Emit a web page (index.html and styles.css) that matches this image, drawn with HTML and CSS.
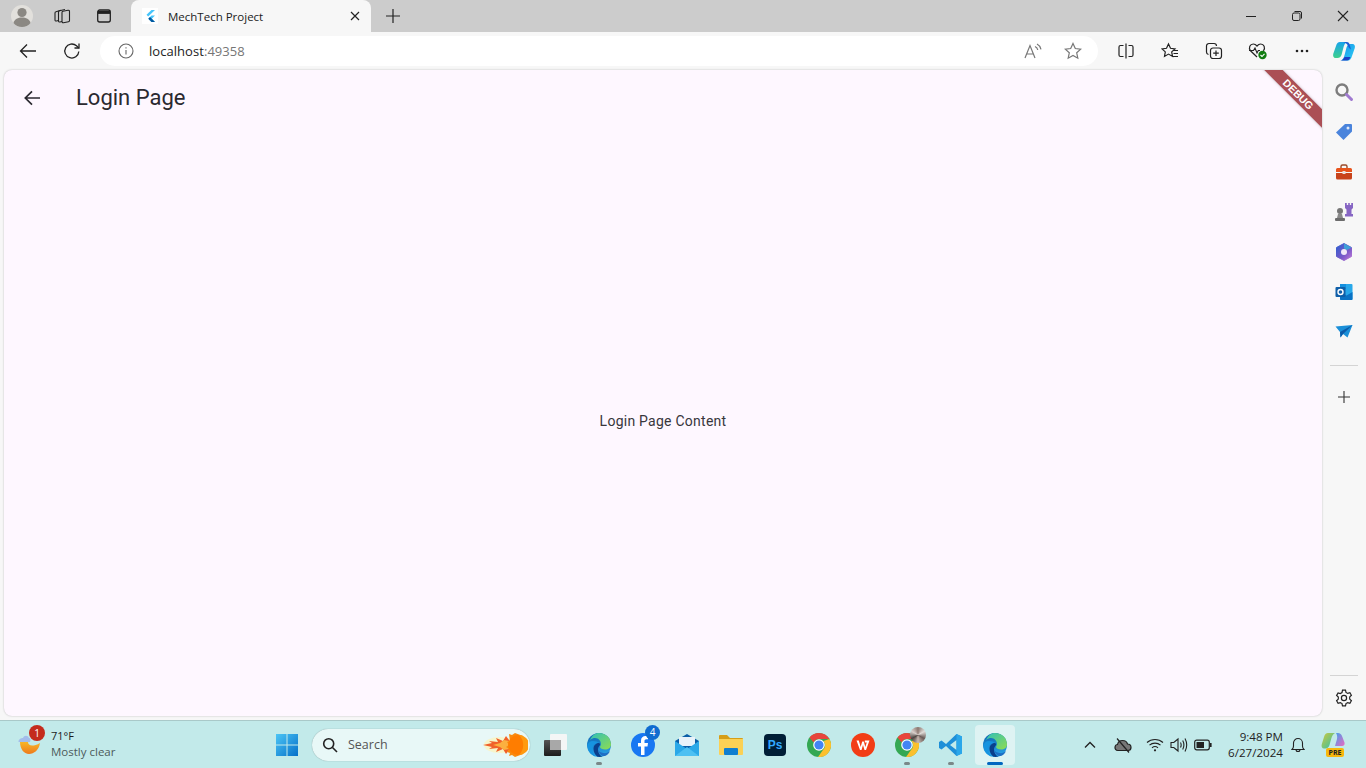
FILE: index.html
```html
<!DOCTYPE html>
<html lang="en">
<head>
    <meta charset="UTF-8">
    <title>MechTech Project</title>
    <link rel="stylesheet" href="styles.css">
</head>
<body>
    <div class="tabbar">
        <div class="tb-slot profile">
            <svg width="24" height="24" viewBox="0 0 24 24"><circle cx="12" cy="12" r="11" fill="#e2e0dc"/><circle cx="12" cy="8.5" r="4.6" fill="#8b8883"/><path d="M3.5 19c1-4 4.5-5.5 8.5-5.5s7.5 1.500 8.500 5.500c-2 2.500-5 4-8.500 4s-6.500-1.500-8.500-4z" fill="#8b8883"/></svg>
        </div>
        <div class="tb-slot workspaces">
            <svg width="18" height="18" viewBox="0 0 18 18" fill="none" stroke="#222" stroke-width="1.1"><path d="M9 5.5q0-1 1-1.200l5-1q1.500-.2 1.500 1.200v9q0 1-1 1.200l-5 1q-1.500.2-1.500-1.200z"/><path d="M9 14.500l-2 .5q-1.500.2-1.500-1V5q0-1 1-1.200L12 2.500"/><path d="M5.500 13.500l-2 .5Q2 14.200 2 13V6q0-1 1-1.200L8 3.200"/></svg>
        </div>
        <div class="tb-slot tabactions">
            <svg width="16" height="16" viewBox="0 0 16 16" fill="none" stroke="#222" stroke-width="1.3"><rect x="1.7" y="2" width="12.6" height="12" rx="2"/><path d="M2 4.400h12" stroke-width="3"/></svg>
        </div>
        <div class="tab">
            <svg class="favicon" width="16" height="16" viewBox="0 0 16 16"><rect width="16" height="16" fill="#fff"/><path d="M9.5 2H13L6.200 8.500 4.500 6.800z" fill="#47c5fb"/><path d="M9.5 7.500H13L9.800 10.700 13 14H9.500L6.300 10.700z" fill="#47c5fb"/><path d="M6.300 10.700L8 9l1.800 1.700L8 12.500z" fill="#00569e"/><path d="M8 12.500l1.800-1.800L13 14H9.500z" fill="#00569e"/></svg>
            <span class="tab-title">MechTech Project</span>
            <svg class="tab-close" width="10" height="10" viewBox="0 0 10 10" stroke="#222" stroke-width="1.2"><path d="M1 1l8 8M9 1L1 9"/></svg>
        </div>
        <div class="tb-slot newtab">
            <svg width="16" height="16" viewBox="0 0 16 16" stroke="#222" stroke-width="1.2"><path d="M8 1v14M1 8h14"/></svg>
        </div>
        <div class="window-btns">
            <div class="win-btn"><svg width="12" height="12" viewBox="0 0 12 12" stroke="#222"><path d="M1 6.500h10"/></svg></div>
            <div class="win-btn"><svg width="12" height="12" viewBox="0 0 12 12" fill="none" stroke="#222"><rect x="1.500" y="3" width="7.500" height="7.500" rx="1.500"/><path d="M3.500 1.500H9A1.500 1.500 0 0 1 10.500 3v5.500"/></svg></div>
            <div class="win-btn"><svg width="12" height="12" viewBox="0 0 12 12" stroke="#222" stroke-width="1.1"><path d="M1 1l10 10M11 1L1 11"/></svg></div>
        </div>
    </div>

    <div class="toolbar">
        <div class="tool back">
            <svg width="18" height="16" viewBox="0 0 18 16" fill="none" stroke="#222" stroke-width="1.3"><path d="M17 8H1.500M8 1.500L1.500 8 8 14.500"/></svg>
        </div>
        <div class="tool reload">
            <svg width="18" height="18" viewBox="0 0 18 18" fill="none" stroke="#222" stroke-width="1.3"><path d="M15.800 9.500a7 7 0 1 1-2.300-5.700L15.800 6"/><path d="M16 1.500V6h-4.500"/></svg>
        </div>
        <div class="address">
            <svg class="info" width="16" height="16" viewBox="0 0 16 16" fill="none" stroke="#666" stroke-width="1.1"><circle cx="8" cy="8" r="7"/><path d="M8 7v4.500M8 4.300v1.200"/></svg>
            <span class="url">localhost<span class="port">:49358</span></span>
            <svg class="aloud" width="18" height="16" viewBox="0 0 18 16" fill="none" stroke="#777" stroke-width="1.2"><path d="M1 15L6 2.500 11 15M2.800 11h6.500"/><path d="M11 3.500c1.500.7 2.500 2 2.800 3.500M13 1c2 1 3.500 3 4 5.300"/></svg>
            <svg class="star" width="18" height="18" viewBox="0 0 18 18" fill="none" stroke="#777" stroke-width="1.2"><path d="M9 1.500l2.300 5 5.400.6-4 3.700 1.100 5.400L9 13.500l-4.800 2.700 1.100-5.400-4-3.700 5.400-.6z"/></svg>
        </div>
        <div class="tool split">
            <svg width="16" height="16" viewBox="0 0 16 16" fill="none" stroke="#222" stroke-width="1.2"><path d="M5.500 2.500h-3A1.500 1.500 0 0 0 1 4v8a1.500 1.500 0 0 0 1.500 1.500h3M10.500 2.500h3A1.500 1.500 0 0 1 15 4v8a1.500 1.500 0 0 1-1.500 1.500h-3M8 .5v15"/></svg>
        </div>
        <div class="tool favs">
            <svg width="18" height="18" viewBox="0 0 18 18" fill="none" stroke="#222" stroke-width="1.2"><path d="M7.500 2l2 4.300 4.500.6-3.300 3 .8 4.500-4-2.300-4 2.300.8-4.500L1 6.900l4.500-.6z"/><path d="M12 8.500h5M12.500 11.500h4.500M12 14.500h5"/></svg>
        </div>
        <div class="tool collections">
            <svg width="18" height="18" viewBox="0 0 18 18" fill="none" stroke="#222" stroke-width="1.2"><path d="M3.500 12.500A2.500 2.500 0 0 1 1.500 10V4A2.500 2.500 0 0 1 4 1.500h5A2.500 2.500 0 0 1 11.500 4"/><rect x="5.500" y="6" width="11" height="10.500" rx="2.500"/><path d="M11 8.500V14M8.200 11.200h5.600"/></svg>
        </div>
        <div class="tool health">
            <svg width="20" height="18" viewBox="0 0 20 18"><path d="M9 15L2.500 8.800C.2 6 2 2 5.300 2 7 2 8 2.800 9 4c1-1.200 2-2 3.700-2 3.300 0 5 4 2.700 6.800" fill="none" stroke="#222" stroke-width="1.2"/><path d="M1 8.500h4.500L7 6l2 5 1.300-2.500H12" fill="none" stroke="#222" stroke-width="1.1"/><circle cx="14.500" cy="13" r="4.200" fill="#107c10"/><path d="M12.500 13l1.500 1.500 2.500-2.700" fill="none" stroke="#fff" stroke-width="1.1"/></svg>
        </div>
        <div class="tool more">
            <svg width="14" height="4" viewBox="0 0 14 4" fill="#222"><circle cx="2" cy="2" r="1.3"/><circle cx="7" cy="2" r="1.3"/><circle cx="12" cy="2" r="1.3"/></svg>
        </div>
        <div class="tool copilot">
            <svg width="24" height="24" viewBox="0 0 24 24"><defs><linearGradient id="cpa" x1="0" y1="0" x2="0" y2="1"><stop offset="0" stop-color="#18a4ec"/><stop offset="1" stop-color="#3ed08c"/></linearGradient><linearGradient id="cpb" x1="0" y1="0" x2="1" y2="1"><stop offset="0" stop-color="#1490ea"/><stop offset="1" stop-color="#2fd0f4"/></linearGradient></defs><path d="M8 3h7c-2 1-3 3-3.700 6L9.500 16c-.7 2-2 3-4 3h-2C1.500 19 .8 17 1.200 15L4 7c.7-2.500 2-4 4-4z" fill="url(#cpa)"/><path d="M16 21.500H9c2-1 3-3 3.700-6l1.800-7c.7-2 2-3.500 4-3.500h2c2 0 2.800 2 2.300 4L20 17c-.7 2.500-2 4.500-4 4.500z" fill="url(#cpb)"/><path d="M8 21.500h7c2 0 3-2 3.500-3.500h-6c-.8 1.700-2.200 3.500-4.500 3.500z" fill="#1b3fc4"/><path d="M11 3h4c1 0 2 .7 2.500 2l1.500 5.500c-1.500-1-2.500-2-3-3.500-.5-1.500-1.800-3.500-5-4z" fill="#1d5fd6"/></svg>
        </div>
    </div>

    <div class="middle">
        <div class="page">
            <div class="appbar">
                <div class="appbar-back">
                    <svg width="16" height="16" viewBox="0 0 16 16" fill="none" stroke="#2b2930" stroke-width="1.7"><path d="M16 8H1.500M8 1.300L1.300 8 8 14.700"/></svg>
                </div>
                <div class="appbar-title">Login Page</div>
            </div>
            <div class="content">Login Page Content</div>
            <div class="debug-banner">DEBUG</div>
        </div>
        <div class="sidebar">
            <div class="side-item">
                <svg width="20" height="20" viewBox="0 0 20 20" fill="none"><circle cx="8" cy="8" r="5.500" stroke="#7d7d7d" stroke-width="2.4"/><path d="M12.500 12.500l5 5" stroke="#a07ad0" stroke-width="3" stroke-linecap="round"/></svg>
            </div>
            <div class="side-item">
                <svg width="18" height="18" viewBox="0 0 18 18"><path d="M10 1h6a1 1 0 0 1 1 1v6.500L8.500 17 1 9.500z" fill="#4a84dc"/><circle cx="13" cy="5" r="1.500" fill="#dfe9f8"/></svg>
            </div>
            <div class="side-item">
                <svg width="18" height="16" viewBox="0 0 18 16"><path d="M6 4V2.500A1.500 1.500 0 0 1 7.500 1h3A1.500 1.500 0 0 1 12 2.500V4" fill="none" stroke="#9a4a28" stroke-width="1.4"/><path d="M1 5.500A1.500 1.500 0 0 1 2.500 4h13A1.500 1.500 0 0 1 17 5.500V8H1z" fill="#e8541c"/><path d="M1 9h16v5a1.500 1.500 0 0 1-1.500 1.500h-13A1.500 1.500 0 0 1 1 14z" fill="#c8431a"/><rect x="7.500" y="7" width="3" height="3" fill="#eadfd8"/></svg>
            </div>
            <div class="side-item">
                <svg width="20" height="20" viewBox="0 0 20 20"><path d="M11 1h1.800v2h1.400V1h1.600v2h1.400V1H19v5l-1.500 1.500V12H19v2.500h-8V12h1.500V7.500L11 6z" fill="#8766c4"/><circle cx="6" cy="9" r="3" fill="#767676"/><path d="M4 12h4l1 4H3z" fill="#8a8a8a"/><rect x="1" y="16" width="10" height="3" rx="1" fill="#6c6c6c"/></svg>
            </div>
            <div class="side-item">
                <svg width="18" height="18" viewBox="0 0 18 18"><defs><linearGradient id="m365" x1="0" y1="0" x2="1" y2="1"><stop offset="0" stop-color="#2a5fd0"/><stop offset=".6" stop-color="#7a58c8"/><stop offset="1" stop-color="#c27ad8"/></linearGradient></defs><path d="M9 .5l7.500 4v9L9 17.500l-7.500-4v-9z" fill="url(#m365)" stroke="url(#m365)" stroke-linejoin="round"/><path d="M9 .5l7.500 4L12 7 9 5.500z" fill="#3fa0d8"/><circle cx="9" cy="9" r="3" fill="#f0e8f8"/></svg>
            </div>
            <div class="side-item">
                <svg width="18" height="18" viewBox="0 0 18 18"><rect x="5" y="1" width="12.500" height="16" rx="1" fill="#28a8ea"/><path d="M5 9l6.500 3.500L17.500 9v7a1 1 0 0 1-1 1H6a1 1 0 0 1-1-1z" fill="#0a72c4"/><rect x="5" y="1" width="6" height="5" fill="#1490df"/><rect x=".5" y="4" width="10" height="10" rx="1" fill="#0f5fa8"/><circle cx="5.500" cy="9" r="2.500" fill="none" stroke="#fff" stroke-width="1.4"/></svg>
            </div>
            <div class="side-item">
                <svg width="18" height="16" viewBox="0 0 18 16"><path d="M.5 2.500L17.500 1l-5 12.500L8 10l-2.500 3.500L5 8z" fill="#1a8fd8"/><path d="M5 8L17.500 1 8 10l-2.500 3.500z" fill="#0b5aa8"/></svg>
            </div>
            <div class="side-divider first"></div>
            <div class="side-add">
                <svg width="14" height="14" viewBox="0 0 14 14" stroke="#333" stroke-width="1.1"><path d="M7 1v12M1 7h12"/></svg>
            </div>
            <div class="side-spacer"></div>
            <div class="side-divider"></div>
            <div class="side-gear">
                <svg width="18" height="18" viewBox="0 0 18 18" fill="none" stroke="#222" stroke-width="1.2"><circle cx="9" cy="9" r="2.600"/><path d="M7.500 1.200h3l.5 2.200 1.700 1 2.200-.7 1.500 2.600-1.700 1.600v2.200l1.700 1.600-1.500 2.600-2.200-.7-1.700 1-.5 2.200h-3l-.5-2.200-1.700-1-2.200.7-1.500-2.600 1.700-1.600V8.100L1.600 6.500l1.500-2.600 2.200.7 1.700-1z"/></svg>
            </div>
        </div>
    </div>

    <div class="taskbar">
        <div class="weather">
            <div class="weather-icon">
                <svg width="24" height="24" viewBox="0 0 24 24"><defs><linearGradient id="moon" x1="0" y1="0" x2="0" y2="1"><stop offset="0" stop-color="#f8b628"/><stop offset="1" stop-color="#ee7a1c"/></linearGradient></defs><path d="M2 9h8c0 4 5 5 12 1-1 7-6 11-11 11-5 0-9-5-9-12z" fill="url(#moon)"/><path d="M.5 9c0-3 2.500-4 4.500-4 1-3 5-3 6 0 1.500 0 2 2 1 4z" fill="#a3bcec"/></svg>
                <span class="weather-badge">1</span>
            </div>
            <div class="weather-text">
                <div class="temp">71°F</div>
                <div class="cond">Mostly clear</div>
            </div>
        </div>
        <div class="task-slot start">
            <svg width="24" height="24" viewBox="0 0 24 24"><defs><linearGradient id="winb" x1="0" y1="0" x2="1" y2="1"><stop offset="0" stop-color="#4cc5f5"/><stop offset="1" stop-color="#0570c9"/></linearGradient></defs><path d="M1 1h10.500v10.500H1zM12.500 1H23v10.500H12.500zM1 12.500h10.500V23H1zM12.500 12.500H23V23H12.500z" fill="url(#winb)"/></svg>
        </div>
        <div class="searchbox">
            <svg class="search-icon" width="16" height="16" viewBox="0 0 16 16" fill="none" stroke="#222" stroke-width="1.6"><circle cx="6.700" cy="6.700" r="5"/><path d="M10.500 10.500L15 15"/></svg>
            <span class="search-text">Search</span>
            <svg class="search-art" width="46" height="26" viewBox="0 0 46 26"><ellipse cx="18" cy="13" rx="16" ry="8" fill="#fdf4b8" opacity=".7"/><path d="M1 13l9-2-3-2 9 1-2-4 7 3 3-5 3 4v10l-3 4-3-5-7 3 2-4-9 1 3-2z" fill="#f0602a"/><path d="M11 13l7-2 4-3 5 1v8l-5 1-4-3z" fill="#fbb040"/><path d="M27 2l3 1 3-2 8 3v18l-8 3-3-2-3 1 1-3-3-1 2-3-3-2 3-2-2-3 3-1z" fill="#f98a10"/><circle cx="36" cy="13" r="10" fill="#ff7d00"/><path d="M37 3a10 10 0 0 1 0 20 14 14 0 0 0 0-20z" fill="#ff9a10"/></svg>
        </div>
        <div class="task-slot">
            <svg width="24" height="24" viewBox="0 0 24 24"><defs><linearGradient id="tvk" x1="0" y1="0" x2="0" y2="1"><stop offset="0" stop-color="#555"/><stop offset="1" stop-color="#1c1c1c"/></linearGradient></defs><rect x="1" y="7" width="17" height="16" rx="1" fill="url(#tvk)"/><rect x="7" y="1" width="17" height="16" rx="1" fill="#f4f6f6"/><rect x="7" y="7" width="11" height="10" fill="#a8a8a8"/></svg>
        </div>
        <div class="task-slot">
            <svg width="26" height="26" viewBox="0 0 26 26"><use href="#edge-mark"/></svg>
            <span class="run-dot"></span>
        </div>
        <div class="task-slot">
            <svg width="24" height="24" viewBox="0 0 24 24"><circle cx="12" cy="12" r="12" fill="#1877f2"/><path d="M13.500 22v-8.500h3l.5-3.500h-3.500V8c0-1 .5-1.800 1.900-1.800H17v-3C16.500 3.100 15.500 3 14.500 3 12 3 10 4.500 10 7.500V10H7v3.500h3V22z" fill="#fff"/></svg>
            <span class="fb-badge">4</span>
        </div>
        <div class="task-slot">
            <svg width="24" height="22" viewBox="0 0 24 22"><path d="M12 0l12 7v15H0V7z" fill="#0a5ea8"/><rect x="4" y="3" width="16" height="9" fill="#e8f2fa"/><path d="M0 7l12 8 12-8v15H0z" fill="#2aa8e8"/><path d="M0 22l12-9 12 9z" fill="#4cc0f2"/></svg>
        </div>
        <div class="task-slot">
            <svg width="24" height="22" viewBox="0 0 24 22"><path d="M0 2a1 1 0 0 1 1-1h7l3 3h12a1 1 0 0 1 1 1v3H0z" fill="#d69e18"/><path d="M0 5h24v15a1 1 0 0 1-1 1H1a1 1 0 0 1-1-1z" fill="#fbd155"/><rect x="5" y="14" width="14" height="7" rx="1" fill="#0f7fd0"/></svg>
        </div>
        <div class="task-slot">
            <div class="ps-icon">Ps</div>
        </div>
        <div class="task-slot">
            <svg width="24" height="24" viewBox="0 0 24 24"><use href="#chrome-mark"/></svg>
        </div>
        <div class="task-slot">
            <svg width="24" height="24" viewBox="0 0 24 24"><circle cx="12" cy="12" r="12" fill="#f23d16"/><path d="M5.500 7.500L9 17h1.500L12 12l1.500 5H15l3.500-9.500h-4.700v2h2L14.300 14l-1.500-5.500h-1.600L9.700 14 7.800 7.500z" fill="#fff"/></svg>
        </div>
        <div class="task-slot">
            <svg width="24" height="24" viewBox="0 0 24 24"><use href="#chrome-mark"/></svg>
            <span class="chrome-avatar"></span>
            <span class="run-dot"></span>
        </div>
        <div class="task-slot">
            <svg width="24" height="24" viewBox="0 0 24 24"><path d="M17.500 1L23 3.500v17L17.500 23 7 13l-4.500 3.500L0 15V9l2.500-1.500L7 11zm0 6L11 12l6.500 5z" fill="#1e8fd8"/><path d="M17.500 1L23 3.500v17L17.500 23z" fill="#2aa7ea"/></svg>
            <span class="run-dot"></span>
        </div>
        <div class="task-slot active">
            <svg width="26" height="26" viewBox="0 0 26 26"><use href="#edge-mark"/></svg>
            <span class="run-bar"></span>
        </div>
        <div class="tray">
            <svg class="tray-chevron" width="12" height="8" viewBox="0 0 12 8" fill="none" stroke="#222" stroke-width="1.3"><path d="M1 6.500l5-5 5 5"/></svg>
            <svg class="tray-cloud" width="18" height="16" viewBox="0 0 18 16" fill="none" stroke="#222" stroke-width="1.2"><path d="M4 13.500c-2.500 0-3-2-3-3 0-2 1.500-3 2.500-3 .5-2.500 2.500-4 5-4s4.500 1.500 5 3.500c2 0 3.500 1.500 3.500 3.500 0 1.500-1 3-3 3z" fill="#777"/><path d="M3 1.500l12 14"/></svg>
            <svg class="tray-wifi" width="18" height="16" viewBox="0 0 18 16" fill="none" stroke="#222" stroke-width="1.1"><path d="M1 5.500c4.500-4 11.500-4 16 0M3.500 8.200c3-2.800 8-2.800 11 0M6 10.800c1.700-1.500 4.300-1.500 6 0"/><circle cx="9" cy="13.300" r="1.100" fill="#222" stroke="none"/></svg>
            <svg class="tray-sound" width="18" height="16" viewBox="0 0 18 16" fill="none" stroke="#222" stroke-width="1.1"><path d="M1 5.500h2.800L8 2v12l-4.200-3.500H1z"/><path d="M10.500 5.500c.8 1.500.8 3.500 0 5M12.700 3.500c1.500 2.800 1.500 6.200 0 9M15 1.500c2 3.800 2 9.200 0 13"/></svg>
            <svg class="tray-battery" width="18" height="12" viewBox="0 0 18 12"><rect x=".7" y="1.200" width="14.600" height="9.600" rx="2" fill="none" stroke="#222" stroke-width="1.2"/><rect x="2.500" y="3" width="7.500" height="6" fill="#222"/><rect x="16" y="4" width="1.600" height="4" fill="#222"/></svg>
            <div class="clock">
                <div>9:48 PM</div>
                <div>6/27/2024</div>
            </div>
            <svg class="tray-bell" width="14" height="16" viewBox="0 0 14 16" fill="none" stroke="#222" stroke-width="1.1"><path d="M1 12.500c1-1 1.500-2 1.500-3.500V6a4.500 4.500 0 0 1 9 0v3c0 1.500.5 2.500 1.500 3.500z"/><path d="M5 12.500a2 2 0 0 0 4 0"/></svg>
            <div class="tray-copilot">
                <svg width="24" height="20" viewBox="0 0 24 20"><defs><linearGradient id="cpg" x1="0" y1="0" x2="1" y2="1"><stop offset="0" stop-color="#d0c83c"/><stop offset="1" stop-color="#28c0b0"/></linearGradient><linearGradient id="cpp" x1="0" y1="0" x2="1" y2="1"><stop offset="0" stop-color="#3fa0ee"/><stop offset="1" stop-color="#ec6ac0"/></linearGradient></defs><path d="M7 1h7c-2 1-3 3-3.700 5.500L8.500 13c-.7 2-2 3.500-4 3.500H3c-2 0-2.800-2-2.300-4L3 5C3.700 2.500 5 1 7 1z" fill="url(#cpg)"/><path d="M15 1h2c2 0 3.500 1.500 4.200 3.500l2.300 6c.5 2-.5 3.500-2.500 3.500h-7l2-7c.5-2 0-4.500-1-6z" fill="url(#cpp)"/></svg>
                <span class="pre-badge">PRE</span>
            </div>
        </div>
    </div>

    <svg class="defs" width="0" height="0">
        <defs>
            <linearGradient id="edgeb" x1="0" y1="0" x2="0" y2="1"><stop offset="0" stop-color="#0d62b0"/><stop offset="1" stop-color="#2aa8ea"/></linearGradient>
            <linearGradient id="edgeg" x1="0" y1="0" x2="1" y2="1"><stop offset="0" stop-color="#2fc0b8"/><stop offset="1" stop-color="#8fdc50"/></linearGradient>
            <symbol id="edge-mark" viewBox="0 0 26 26">
                <circle cx="13" cy="13" r="12" fill="url(#edgeb)"/>
                <path d="M13 1c7 0 12 5 12 11.500 0 3-2.500 5-6 5-2.500 0-5-1-5-2.500 0-.8 1-1.200 1-3 0-3-2.500-6-6-6-1.500 0-3 .4-5 2C6 3.500 9 1 13 1z" fill="url(#edgeg)"/>
                <path d="M7 9c-3 0-5 2-5.500 4.500 0 5 3 9.500 8 11-2-2-3-5-3-7.500C6.500 13.500 9 11 13 11c-1-1.300-3.500-2-6-2z" fill="#1793e0"/>
                <path d="M13 11c-3 0-5.500 2.500-5.500 6 0 3 1.500 6 4 7.800 1 .2 3 .3 5-.2-3-1-4.500-4-4.500-7 0-2.500 1-3.200 2-4.600.3-.6-.2-1.700-1-2z" fill="#0a3f8c"/>
                <path d="M12 18c1 4 4 6.500 7 6 2-.8 4-2.500 5-5-1.500 1.500-4 2.500-6.500 2-2.500-.5-4.500-1.500-5.500-3z" fill="#1f6fc4"/>
            </symbol>
            <symbol id="chrome-mark" viewBox="0 0 24 24">
                <circle cx="12" cy="12" r="12" fill="#34a853"/>
                <path d="M12 0a12 12 0 0 1 10.400 6H12a6 6 0 0 0-5.400 3.400L2.500 4.600A12 12 0 0 1 12 0z" fill="#e8453c"/>
                <path d="M22.400 6A12 12 0 0 1 11 24l5.300-7.500A6 6 0 0 0 16.500 8z" fill="#fbc02d"/>
                <circle cx="12" cy="12" r="5.800" fill="#fff"/>
                <circle cx="12" cy="12" r="4.600" fill="#4285f4"/>
            </symbol>
        </defs>
    </svg>
</body>
</html>
```

FILE: styles.css
```css
* {
    box-sizing: border-box;
}
body {
    margin: 0;
    width: 1366px;
    height: 768px;
    overflow: hidden;
    display: flex;
    flex-direction: column;
    font-family: "Open Sans", Arial, sans-serif;
    background: #f7f7f7;
    color: #222;
}
svg {
    display: block;
    flex: none;
}
.defs {
    position: absolute;
}

/* tab strip */
.tabbar {
    height: 32px;
    flex: none;
    display: flex;
    align-items: center;
    background: #cccccc;
}
.tb-slot {
    display: flex;
    justify-content: center;
    align-items: center;
}
.profile {
    width: 44px;
}
.workspaces {
    width: 36px;
}
.tabactions {
    width: 48px;
}
.tab {
    width: 240px;
    height: 32px;
    margin-left: 3px;
    padding: 0 11px;
    display: flex;
    align-items: center;
    background: #f7f7f7;
    border-radius: 8px 8px 0 0;
}
.tab-title {
    margin-left: 10px;
    flex: 1;
    font-size: 11.5px;
    color: #222;
}
.newtab {
    width: 44px;
}
.window-btns {
    margin-left: auto;
    display: flex;
}
.win-btn {
    width: 46px;
    display: flex;
    justify-content: center;
    align-items: center;
}

/* address bar row */
.toolbar {
    height: 38px;
    flex: none;
    display: flex;
    align-items: center;
    padding-left: 6px;
}
.tool {
    width: 44px;
    height: 30px;
    display: flex;
    justify-content: center;
    align-items: center;
}
.address {
    width: 998px;
    height: 30px;
    margin-left: 6px;
    margin-right: 5px;
    padding: 0 16px 0 18px;
    display: flex;
    align-items: center;
    background: #fff;
    border-radius: 15px;
}
.url {
    margin-left: 15px;
    flex: 1;
    font-size: 13px;
    letter-spacing: 0.05px;
    color: #222;
}
.port {
    color: #767676;
}
.star {
    margin-left: 22px;
}
.split {
    width: 45px;
}
.copilot {
    width: 40px;
}

/* page and sidebar */
.middle {
    flex: 1;
    min-height: 0;
    display: flex;
    padding-left: 4px;
}
.page {
    width: 1318px;
    height: 646px;
    position: relative;
    overflow: hidden;
    display: flex;
    flex-direction: column;
    background: #fef7ff;
    border-radius: 8px;
    box-shadow: 0 0 2px rgba(0, 0, 0, 0.25);
}
.appbar {
    height: 56px;
    flex: none;
    display: flex;
    align-items: center;
}
.appbar-back {
    width: 72px;
    padding-left: 20px;
}
.appbar-title {
    padding-bottom: 2px;
    font-family: Roboto, sans-serif;
    font-size: 22px;
    color: #2b2930;
}
.content {
    flex: 1;
    display: flex;
    justify-content: center;
    align-items: center;
    font-family: Roboto, sans-serif;
    font-size: 14px;
    letter-spacing: 0.25px;
    color: #38363c;
}
.debug-banner {
    position: absolute;
    top: 18px;
    right: -31px;
    width: 110px;
    height: 13px;
    transform: rotate(45deg);
    background: #ab4f55;
    box-shadow: 0 0 3px rgba(0, 0, 0, 0.25);
    text-align: center;
    font-family: "Liberation Sans", Arial, sans-serif;
    font-size: 10.5px;
    font-weight: 700;
    line-height: 13px;
    color: #fff;
}
.sidebar {
    width: 44px;
    height: 650px;
    display: flex;
    flex-direction: column;
    align-items: center;
    padding-top: 2px;
}
.side-item {
    width: 44px;
    height: 40px;
    flex: none;
    display: flex;
    justify-content: center;
    align-items: center;
}
.side-divider {
    width: 28px;
    height: 1px;
    flex: none;
    background: #d4d4d4;
}
.side-divider.first {
    margin-top: 13px;
}
.side-add {
    height: 62px;
    flex: none;
    display: flex;
    align-items: center;
}
.side-spacer {
    flex: 1;
}
.side-gear {
    height: 44px;
    flex: none;
    display: flex;
    align-items: center;
}

/* windows taskbar */
.taskbar {
    height: 48px;
    flex: none;
    display: flex;
    align-items: center;
    position: relative;
    background: #c2eaea;
    border-top: 1px solid #a9c9c9;
}
.weather {
    width: 265px;
    height: 47px;
    padding-left: 18px;
    display: flex;
    align-items: center;
}
.weather-icon {
    position: relative;
    width: 24px;
}
.weather-badge {
    position: absolute;
    top: -8px;
    left: 11px;
    width: 16px;
    height: 16px;
    border-radius: 50%;
    background: #c42b1c;
    color: #fff;
    font-size: 10px;
    line-height: 16px;
    text-align: center;
}
.weather-text {
    margin-left: 9px;
    margin-bottom: 2px;
    font-size: 11px;
    line-height: 16px;
}
.temp {
    color: #1c1c1c;
}
.cond {
    color: #4d5a5a;
    font-size: 11.5px;
}
.task-slot {
    width: 44px;
    height: 40px;
    flex: none;
    position: relative;
    display: flex;
    justify-content: center;
    align-items: center;
}
.task-slot.active {
    background: #def3f3;
    border-radius: 4px;
    width: 40px;
    margin-left: 2px;
}
.searchbox {
    width: 218px;
    height: 32px;
    margin: 0 3px;
    padding: 0 2px 0 10px;
    display: flex;
    align-items: center;
    background: #e8f8f7;
    border-radius: 16px;
    box-shadow: 0 0 1px rgba(0, 0, 0, 0.4);
}
.search-text {
    margin-left: 10px;
    flex: 1;
    font-size: 12.5px;
    color: #555;
}
.run-dot {
    position: absolute;
    left: 19px;
    bottom: 0;
    width: 6px;
    height: 3px;
    border-radius: 2px;
    background: #7a8888;
}
.run-bar {
    position: absolute;
    left: 12px;
    bottom: 0;
    width: 16px;
    height: 3px;
    border-radius: 2px;
    background: #0067c0;
}
.fb-badge {
    position: absolute;
    top: 0;
    left: 24px;
    width: 15px;
    height: 15px;
    border-radius: 50%;
    background: #0f6cd0;
    color: #fff;
    font-size: 10px;
    line-height: 15px;
    text-align: center;
}
.ps-icon {
    width: 22px;
    height: 22px;
    border-radius: 4px;
    background: #001e36;
    color: #31a8ff;
    font-family: "Liberation Sans", Arial, sans-serif;
    font-size: 12px;
    font-weight: 700;
    line-height: 22px;
    text-align: center;
}
.chrome-avatar {
    position: absolute;
    top: 2px;
    left: 25px;
    width: 16px;
    height: 16px;
    border-radius: 50%;
    background: conic-gradient(#8c7870, #e0dcd8, #6a5c58, #c8b8b0, #4c4440, #d8d0cc, #8c7870);
}
.tray {
    margin-left: auto;
    height: 47px;
    padding-right: 21px;
    display: flex;
    align-items: center;
}
.tray-cloud {
    margin-left: 18px;
}
.tray-wifi {
    margin-left: 14px;
}
.tray-sound {
    margin-left: 6px;
}
.tray-battery {
    margin-left: 6px;
}
.clock {
    margin-left: 16px;
    font-size: 11.6px;
    line-height: 16px;
    text-align: right;
    color: #222;
}
.tray-bell {
    margin-left: 8px;
}
.tray-copilot {
    margin-left: 16px;
    position: relative;
    height: 26px;
}
.pre-badge {
    position: absolute;
    left: 5px;
    top: 16px;
    width: 18px;
    height: 9px;
    border-radius: 2px;
    background: #f8b80c;
    color: #222;
    font-size: 7px;
    font-weight: 700;
    line-height: 9px;
    text-align: center;
}
```
